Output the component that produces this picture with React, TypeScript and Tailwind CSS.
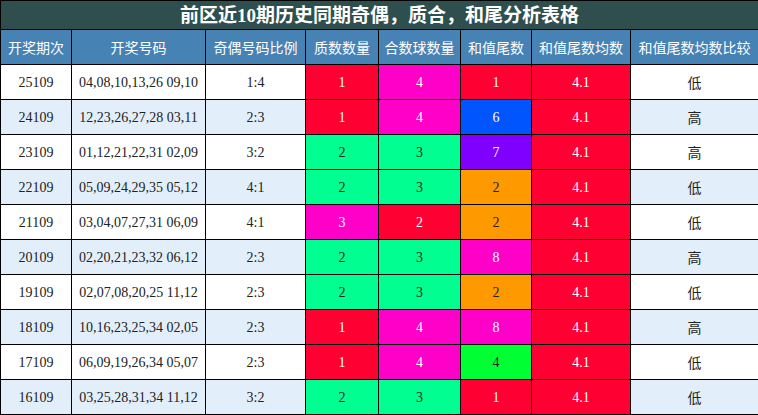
const rows = [
  { q: "25109", n: "04,08,10,13,26 09,10", r: "1:4", p: 1, c: 4, t: 1, cmp: "低" },
  { q: "24109", n: "12,23,26,27,28 03,11", r: "2:3", p: 1, c: 4, t: 6, cmp: "高" },
  { q: "23109", n: "01,12,21,22,31 02,09", r: "3:2", p: 2, c: 3, t: 7, cmp: "高" },
  { q: "22109", n: "05,09,24,29,35 05,12", r: "4:1", p: 2, c: 3, t: 2, cmp: "低" },
  { q: "21109", n: "03,04,07,27,31 06,09", r: "4:1", p: 3, c: 2, t: 2, cmp: "低" },
  { q: "20109", n: "02,20,21,23,32 06,12", r: "2:3", p: 2, c: 3, t: 8, cmp: "高" },
  { q: "19109", n: "02,07,08,20,25 11,12", r: "2:3", p: 2, c: 3, t: 2, cmp: "低" },
  { q: "18109", n: "10,16,23,25,34 02,05", r: "2:3", p: 1, c: 4, t: 8, cmp: "高" },
  { q: "17109", n: "06,09,19,26,34 05,07", r: "2:3", p: 1, c: 4, t: 4, cmp: "低" },
  { q: "16109", n: "03,25,28,31,34 11,12", r: "3:2", p: 2, c: 3, t: 1, cmp: "低" },
];

// cell colours by value
const pCls: Record<number, string> = {
  1: "bg-[#ff0033] text-white",
  2: "bg-[#00ff90] text-[#222]",
  3: "bg-[#ff00c8] text-white",
};
const cCls: Record<number, string> = {
  2: "bg-[#ff0033] text-white",
  3: "bg-[#00ff90] text-[#222]",
  4: "bg-[#ff00c8] text-white",
};
const tailCls: Record<number, string> = {
  1: "bg-[#ff0033] text-white",
  2: "bg-[#ff9900] text-[#222]",
  4: "bg-[#00ff33] text-[#222]",
  6: "bg-[#0055ff] text-white",
  7: "bg-[#8000ff] text-white",
  8: "bg-[#ff00c8] text-white",
};

const heads = ["开奖期次", "开奖号码", "奇偶号码比例", "质数数量", "合数球数量", "和值尾数", "和值尾数均数", "和值尾数均数比较"];

export default function App() {
  return (
    <div className="w-[758px] h-[415px] bg-white overflow-hidden">
      <table
        className="w-[758px] table-fixed border-collapse text-[14px] text-[#222]"
        style={{ fontFamily: '"Liberation Serif", "Noto Sans CJK SC", serif' }}
      >
        <colgroup>
          <col className="w-[71px]" />
          <col className="w-[134px]" />
          <col className="w-[100px]" />
          <col className="w-[73px]" />
          <col className="w-[82px]" />
          <col className="w-[71px]" />
          <col className="w-[99px]" />
          <col className="w-[128px]" />
        </colgroup>
        <thead>
          <tr>
            <th
              colSpan={8}
              className="h-[29px] p-0 bg-[#2f4f4f] border border-black text-white text-[19px] font-bold text-center leading-none"
            >
              前区近10期历史同期奇偶，质合，和尾分析表格
            </th>
          </tr>
          <tr>
            {heads.map((h) => (
              <th
                key={h}
                className="h-[35px] p-0 bg-[#4682b4] border border-black text-white font-normal text-center whitespace-nowrap"
                style={{ fontFamily: '"Noto Sans CJK SC", sans-serif' }}
              >
                {h}
              </th>
            ))}
          </tr>
        </thead>
        <tbody>
          {rows.map((r, i) => {
            const bg = i % 2 === 1 ? "bg-[#e2effb]" : "bg-white";
            return (
              <tr key={r.q} className="h-[35px]">
                <td className={`p-0 border border-black text-center ${bg}`}>{r.q}</td>
                <td className={`p-0 border border-black text-center whitespace-nowrap ${bg}`}>{r.n}</td>
                <td className={`p-0 border border-black text-center ${bg}`}>{r.r}</td>
                <td className={`p-0 border border-black text-center ${pCls[r.p]}`}>{r.p}</td>
                <td className={`p-0 border border-black text-center ${cCls[r.c]}`}>{r.c}</td>
                <td className={`p-0 border border-black text-center ${tailCls[r.t]}`}>{r.t}</td>
                <td className="p-0 border border-black text-center bg-[#ff0033] text-white">4.1</td>
                <td
                  className={`p-0 border border-black text-center ${bg}`}
                  style={{ fontFamily: '"Noto Sans CJK SC", sans-serif' }}
                >
                  {r.cmp}
                </td>
              </tr>
            );
          })}
        </tbody>
      </table>
    </div>
  );
}
